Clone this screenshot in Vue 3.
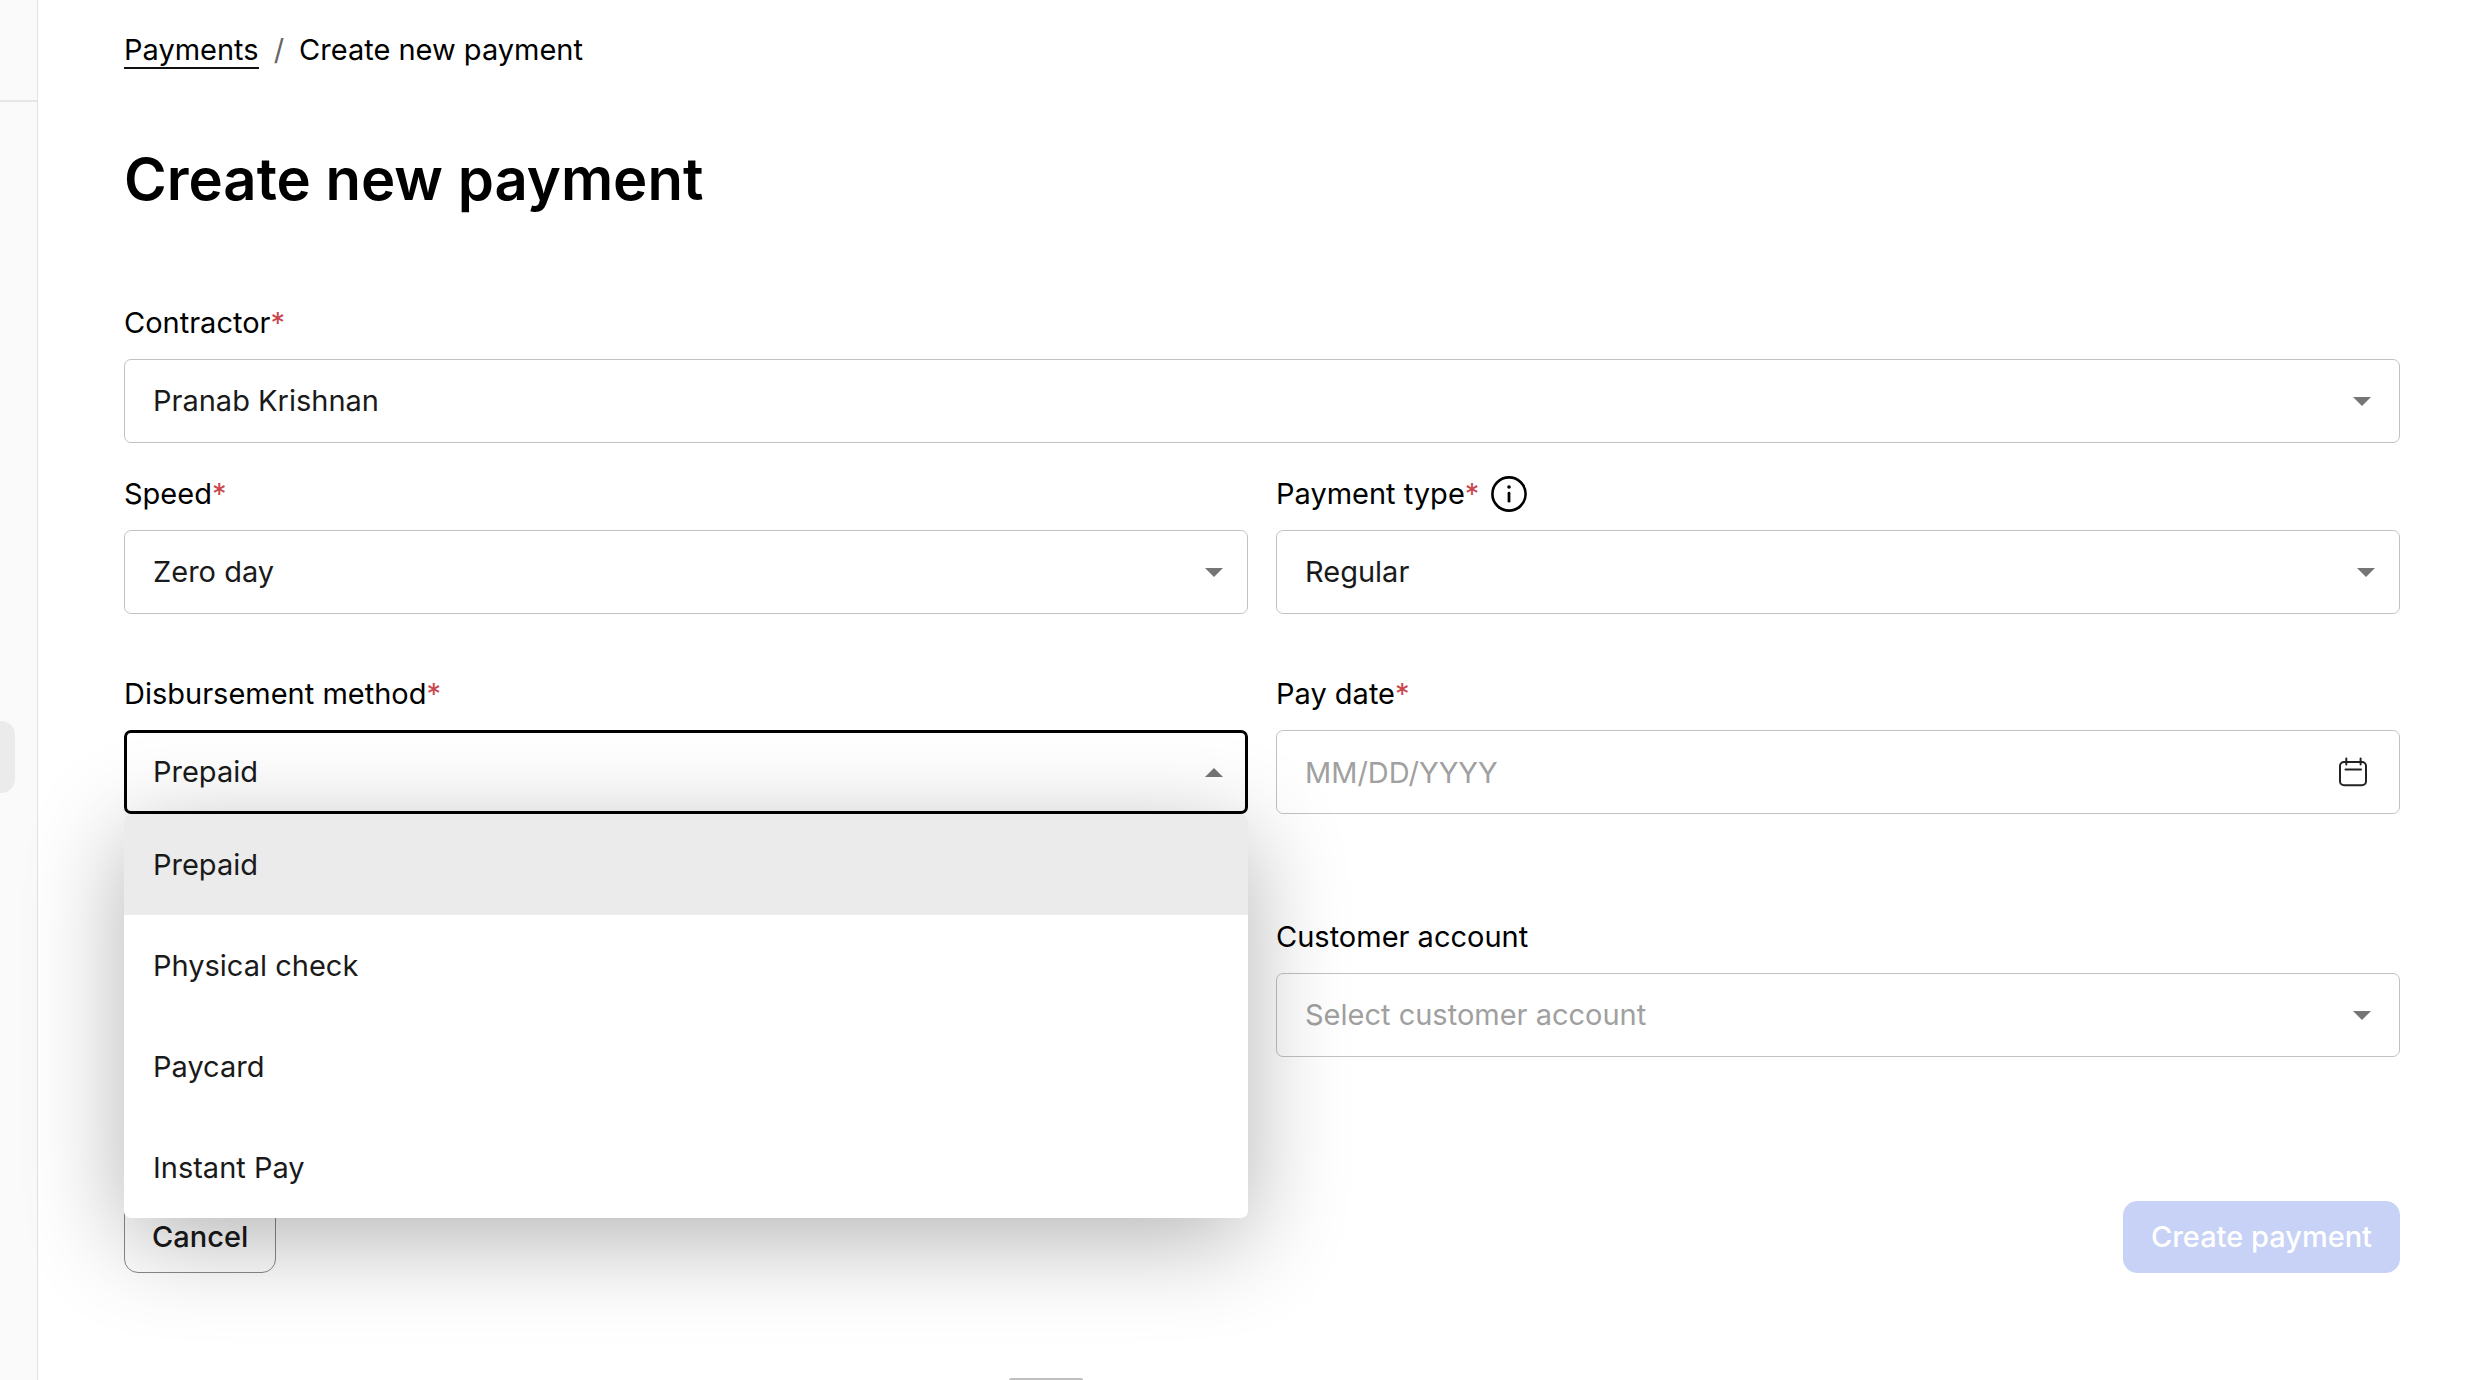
<script setup>
import { ref } from 'vue'

const contractor = ref('Pranab Krishnan')
const speed = ref('Zero day')
const paymentType = ref('Regular')
const method = ref('Prepaid')
const payDate = ref('')
const account = ref('')
const menuOpen = ref(true)
const methods = ['Prepaid', 'Physical check', 'Paycard', 'Instant Pay']

function pick(item) {
  method.value = item
  menuOpen.value = false
}
</script>

<template>
  <div class="page">
    <aside class="sidebar">
      <div class="sidebar-head"></div>
      <div class="sidebar-active"></div>
    </aside>

    <main class="main">
      <nav class="crumbs" aria-label="Breadcrumb">
        <a href="#payments" class="crumb-link">Payments</a>
        <span class="slash">/</span>
        <span>Create new payment</span>
      </nav>

      <h1 class="title">Create new payment</h1>

      <form class="form" @submit.prevent>
        <div class="field">
          <div class="label-row">
            <label for="contractor">Contractor<span class="req">*</span></label>
          </div>
          <div class="control">
            <select id="contractor" v-model="contractor" class="box">
              <option>Pranab Krishnan</option>
            </select>
            <svg class="arrow arrow-inset" viewBox="0 0 18 9" aria-hidden="true"><path d="M0 0h18L9 9z" /></svg>
          </div>
        </div>

        <div class="row row-speed">
          <div class="field">
            <div class="label-row">
              <label for="speed">Speed<span class="req">*</span></label>
            </div>
            <div class="control">
              <select id="speed" v-model="speed" class="box">
                <option>Zero day</option>
              </select>
              <svg class="arrow" viewBox="0 0 18 9" aria-hidden="true"><path d="M0 0h18L9 9z" /></svg>
            </div>
          </div>
          <div class="field">
            <div class="label-row">
              <label for="type">Payment type<span class="req">*</span></label>
              <svg class="info" viewBox="0 0 36 36" aria-hidden="true">
                <circle cx="18" cy="18" r="16.6" fill="none" stroke="#000" stroke-width="2.6" />
                <circle cx="18" cy="11" r="1.8" />
                <path d="M18 17.2v8" fill="none" stroke="#000" stroke-width="2.8" stroke-linecap="round" />
              </svg>
            </div>
            <div class="control">
              <select id="type" v-model="paymentType" class="box">
                <option>Regular</option>
              </select>
              <svg class="arrow" viewBox="0 0 18 9" aria-hidden="true"><path d="M0 0h18L9 9z" /></svg>
            </div>
          </div>
        </div>

        <div class="row row-method">
          <div class="field">
            <div class="label-row">
              <label for="method">Disbursement method<span class="req">*</span></label>
            </div>
            <div class="control">
              <select id="method" v-model="method" class="box" :class="{ open: menuOpen }" @mousedown.prevent="menuOpen = !menuOpen">
                <option v-for="item in methods" :key="item">{{ item }}</option>
              </select>
              <svg class="arrow" viewBox="0 0 18 9" aria-hidden="true"><path d="M0 9h18L9 0z" /></svg>
              <ul v-if="menuOpen" class="menu" role="listbox" aria-label="Disbursement method">
                <li
                  v-for="item in methods"
                  :key="item"
                  class="option"
                  :class="{ selected: item === method }"
                  role="option"
                  :aria-selected="item === method"
                  @click="pick(item)"
                >{{ item }}</li>
              </ul>
            </div>
          </div>
          <div class="field">
            <div class="label-row">
              <label for="date">Pay date<span class="req">*</span></label>
            </div>
            <div class="control">
              <input id="date" v-model="payDate" class="box" type="text" placeholder="MM/DD/YYYY" />
              <button class="calendar" type="button" aria-label="Choose date">
                <svg viewBox="0 0 30 30" fill="none" stroke="#222" stroke-width="2" stroke-linecap="round" aria-hidden="true">
                  <rect x="2" y="5" width="26" height="23.2" rx="4" />
                  <path d="M8.3 1.6v6M22.6 1.6v6M7.5 12.6h15.5" />
                </svg>
              </button>
            </div>
          </div>
        </div>

        <div class="row row-account">
          <div class="field field-right">
            <div class="label-row">
              <label for="account">Customer account</label>
            </div>
            <div class="control">
              <select id="account" v-model="account" class="box" :class="{ empty: !account }">
                <option value="">Select customer account</option>
              </select>
              <svg class="arrow arrow-inset" viewBox="0 0 18 9" aria-hidden="true"><path d="M0 0h18L9 9z" /></svg>
            </div>
          </div>
        </div>

        <div class="actions">
          <button type="button" class="btn cancel">Cancel</button>
          <button type="submit" class="btn create" disabled>Create payment</button>
        </div>
      </form>

      <div class="handle"></div>
    </main>
  </div>
</template>

<style>
body {
  margin: 0;
  background: #fff;
}
</style>

<style scoped>
.page,
.page * {
  box-sizing: border-box;
}
.page {
  display: flex;
  min-height: 100vh;
  overflow: hidden;
  font-family: Inter, 'Liberation Sans', sans-serif;
  font-size: 29px;
  line-height: 40px;
  color: #000;
}
.sidebar {
  flex: none;
  width: 38px;
  background: #fafafa;
  border-right: 1px solid #e3e3e3;
}
.sidebar-head {
  height: 102px;
  border-bottom: 2px solid #e6e6e6;
}
.sidebar-active {
  width: 15px;
  height: 72px;
  margin-top: 619px;
  border-radius: 0 14px 14px 0;
  background: #ebebeb;
}
.main {
  flex: 1;
  min-width: 0;
  display: flex;
  flex-direction: column;
  padding: 30px 80px 0 86px;
}
.crumbs {
  display: flex;
  gap: 15px;
}
.crumb-link {
  color: #000;
  text-decoration: none;
  height: 39px;
  border-bottom: 2px solid #111;
}
.slash {
  color: #666;
}
.title {
  margin: 73px 0 88px;
  font-size: 58px;
  line-height: 72px;
  font-weight: 600;
}
.form {
  display: flex;
  flex-direction: column;
}
.row {
  display: grid;
  grid-template-columns: 1fr 1fr;
  column-gap: 28px;
}
.row-speed {
  margin-top: 31px;
}
.row-method {
  margin-top: 60px;
}
.row-account {
  margin-top: 103px;
}
.field {
  display: flex;
  flex-direction: column;
  gap: 16px;
  min-width: 0;
}
.field-right {
  grid-column: 2;
}
.label-row {
  display: flex;
  align-items: center;
  gap: 12px;
  height: 40px;
}
.req {
  color: #c9474f;
}
.info {
  width: 36px;
  height: 36px;
}
.control {
  position: relative;
  height: 84px;
}
.box {
  display: block;
  width: 100%;
  height: 84px;
  margin: 0;
  padding: 0 28px;
  border: 1px solid #c2c2c2;
  border-radius: 7px;
  outline: none;
  appearance: none;
  background: #fff;
  font: inherit;
  color: #1a1a1a;
}
.box.open {
  padding: 0 26px;
  border: 3px solid #000;
}
.box.empty,
.box::placeholder {
  color: #a0a0a0;
  opacity: 1;
}
.arrow {
  position: absolute;
  top: 38px;
  right: 25px;
  width: 18px;
  height: 9px;
  fill: #757575;
  pointer-events: none;
}
.arrow-inset {
  right: 29px;
}
.calendar {
  position: absolute;
  top: 27px;
  right: 32px;
  width: 30px;
  height: 30px;
  padding: 0;
  border: 0;
  background: none;
}
.calendar svg {
  display: block;
}
.menu {
  position: absolute;
  z-index: 2;
  top: 100%;
  left: 0;
  right: 0;
  margin: 0;
  padding: 0;
  list-style: none;
  overflow: hidden;
  border-radius: 7px;
  background: #fff;
  box-shadow: 0 21px 98px rgba(0, 0, 0, 0.3);
}
.option {
  padding: 31px 29px 30px;
  color: #1a1a1a;
}
.option.selected {
  background: #ebebeb;
}
.actions {
  display: flex;
  justify-content: space-between;
  margin-top: 144px;
}
.btn {
  height: 72px;
  padding: 0 27px;
  border: 1px solid #8a8a8a;
  border-radius: 14px;
  background: #fff;
  font: inherit;
  font-weight: 500;
  color: #1a1a1a;
}
.create {
  border-color: #c7d2f6;
  background: #c7d2f6;
  color: #fff;
}
.handle {
  width: 74px;
  height: 2px;
  margin-top: auto;
  margin-left: 885px;
  border-radius: 4px 4px 0 0;
  background: #bfbfbf;
}
</style>
